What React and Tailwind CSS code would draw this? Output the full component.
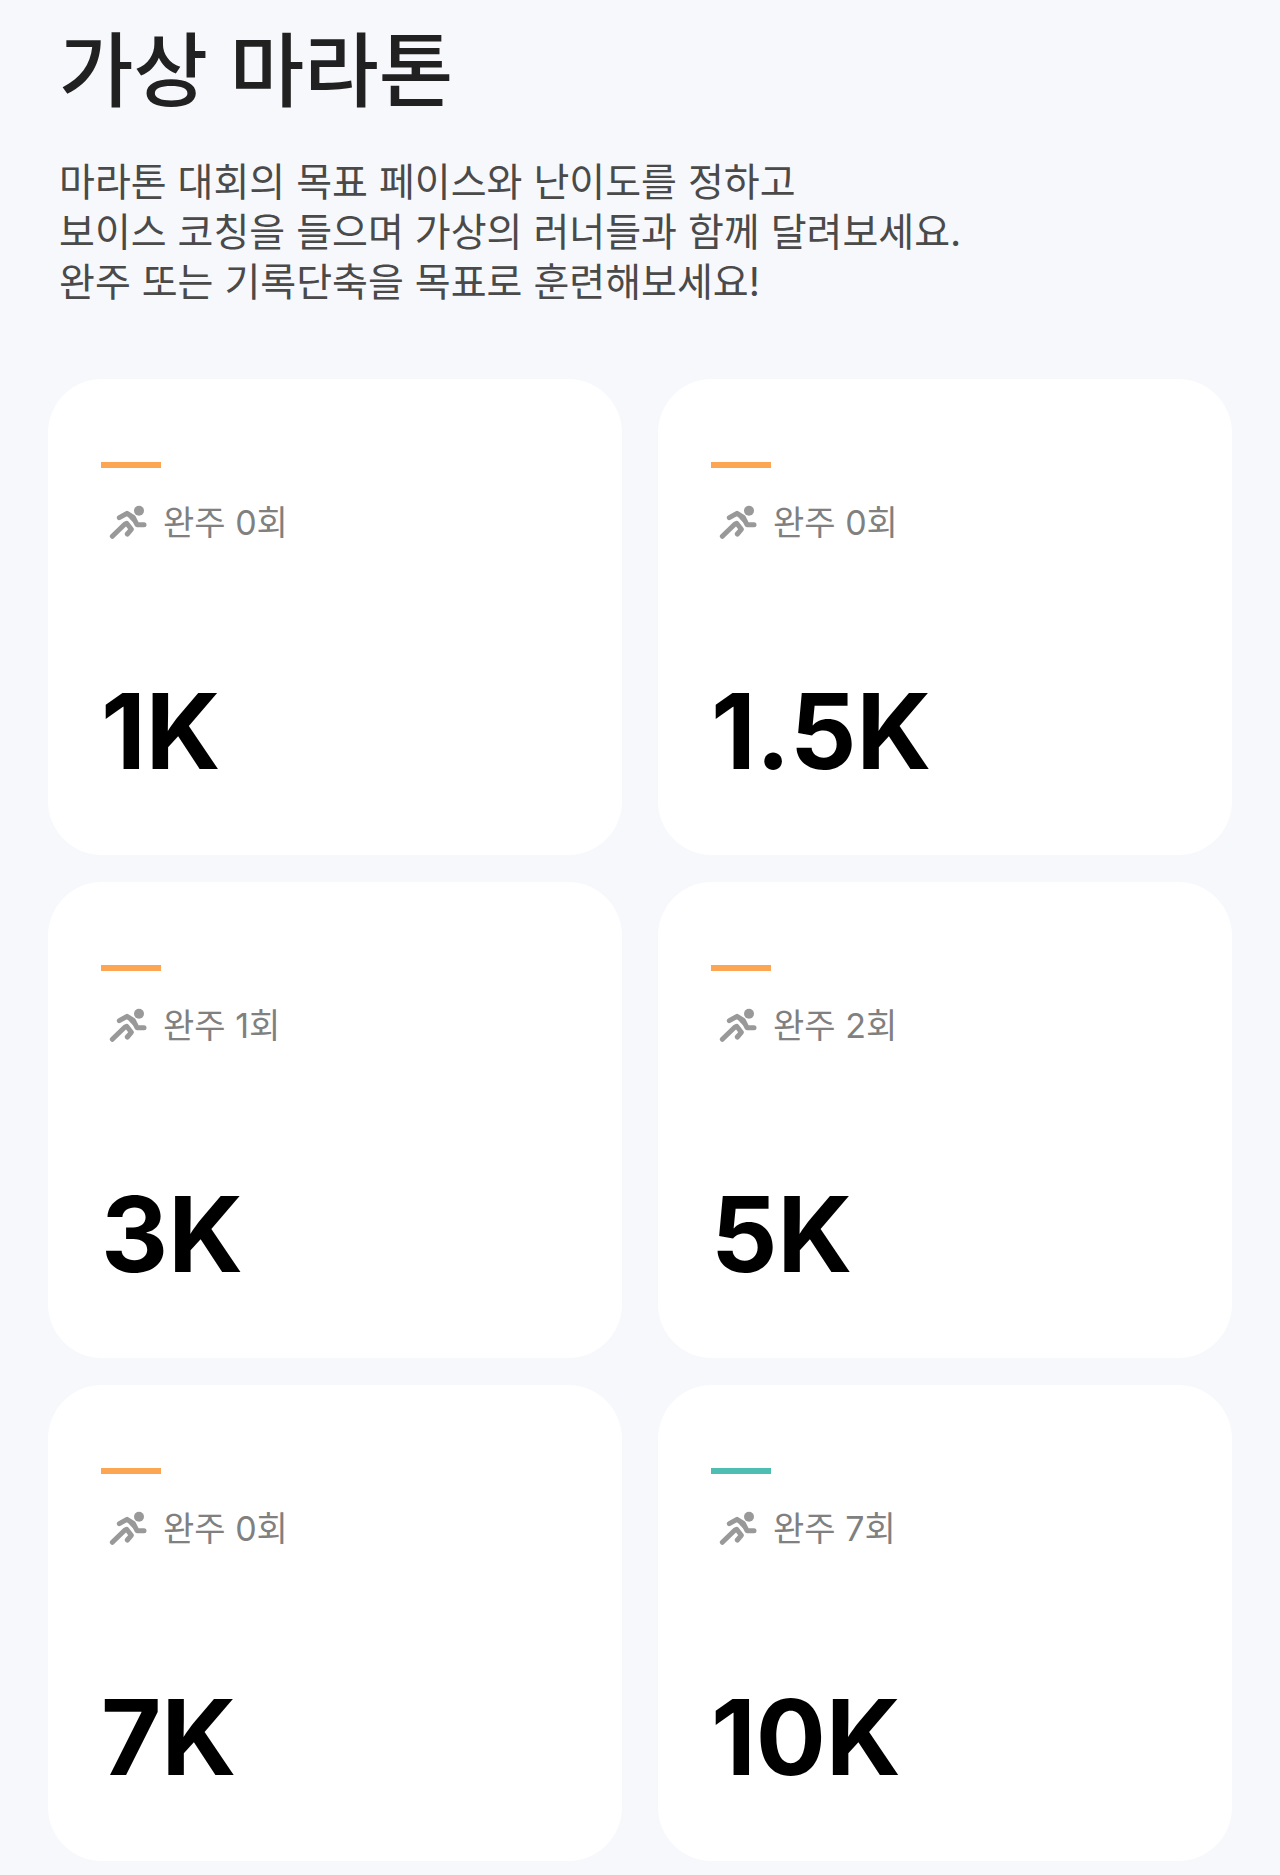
import React from 'react';

const courses = [
  { distance: '1K', finished: 0, bar: 'bg-[#fca553]' },
  { distance: '1.5K', finished: 0, bar: 'bg-[#fca553]' },
  { distance: '3K', finished: 1, bar: 'bg-[#fca553]' },
  { distance: '5K', finished: 2, bar: 'bg-[#fca553]' },
  { distance: '7K', finished: 0, bar: 'bg-[#fca553]' },
  { distance: '10K', finished: 7, bar: 'bg-[#4ebdb2]' },
];

function RunnerIcon() {
  return (
    <svg
      viewBox="42 44 120 108"
      className="h-9 w-10 text-[#999999]"
      fill="none"
      stroke="currentColor"
      strokeWidth="15"
      strokeLinecap="round"
      strokeLinejoin="round"
      aria-hidden="true"
    >
      <circle cx="132" cy="61" r="15" fill="currentColor" stroke="none" />
      <path d="M73 82 L96 69 L115 81 L126 103 L147 103" />
      <path d="M97 73 L113 78 L121 87 L123 101 L106 84 Z" fill="currentColor" strokeWidth="5" />
      <path d="M52 138 L90 101 L95 99 L109 117 L97 131" />
    </svg>
  );
}

function CourseCard({ course }) {
  return (
    <a href="#" className="flex h-[476px] flex-col rounded-[54px] bg-white px-[53px] pt-[83px] pb-16">
      <span className={`h-1.5 w-15 ${course.bar}`} />
      <span className="mt-[35px] flex h-10 items-center gap-3.5 pl-2 text-[34px] leading-10 text-[#808080]">
        <RunnerIcon />
        <span>완주 {course.finished}회</span>
      </span>
      <strong className="mt-auto text-[104px] leading-[120px] font-bold text-black">
        {course.distance}
      </strong>
    </a>
  );
}

function App() {
  return (
    <main className="bg-[#f7f8fc] px-12 pt-5 pb-3.5 font-[Inter,'Noto_Sans_CJK_KR',sans-serif]">
      <header className="px-[11px]">
        <h1 className="text-[81px] leading-[102px] font-medium text-[#212121]">가상 마라톤</h1>
        <p className="mt-[35px] text-[39px] leading-[50px] text-[#4a4a4a]">
          마라톤 대회의 목표 페이스와 난이도를 정하고
          <br />
          보이스 코칭을 들으며 가상의 러너들과 함께 달려보세요.
          <br />
          완주 또는 기록단축을 목표로 훈련해보세요!
        </p>
      </header>
      <section className="mt-[72px] grid grid-cols-2 gap-x-9 gap-y-[27px]">
        {courses.map((course) => (
          <CourseCard key={course.distance} course={course} />
        ))}
      </section>
    </main>
  );
}

export default App;
